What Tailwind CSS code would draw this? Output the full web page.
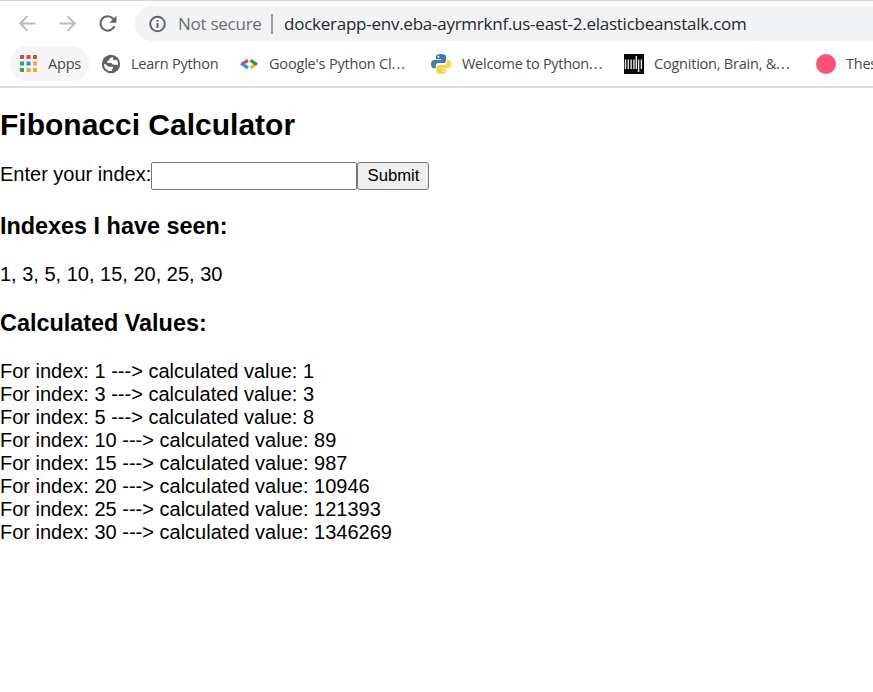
<!DOCTYPE html>
<html lang="en">
<head>
<meta charset="utf-8">
<title>Fibonacci Calculator</title>
<script src="https://cdn.jsdelivr.net/npm/@tailwindcss/browser@4"></script>
</head>
<body class="h-[692px] w-full overflow-hidden bg-white font-['Liberation_Sans',Arial,sans-serif] text-xl leading-[23px] text-black">
<header class="h-[88px] overflow-hidden border-t border-b-2 border-t-[#d4d5d7] border-b-[#dcdddf] font-['Open_Sans','Noto_Sans',sans-serif] whitespace-nowrap">
  <div class="mt-[5px] flex h-[35px] items-center">
    <svg class="ml-[18px] h-5 w-5 shrink-0" viewBox="0 0 20 20" fill="none" stroke="#b9bbbe" stroke-width="1.9"><path d="M17.5 9.5H3M9.5 2.2L2.2 9.5l7.3 7.3"/></svg>
    <svg class="ml-5 h-5 w-5 shrink-0" viewBox="0 0 20 20" fill="none" stroke="#b9bbbe" stroke-width="1.9"><path d="M1.5 9.5H16M9.5 2.2l7.3 7.3-7.3 7.3"/></svg>
    <svg class="ml-5 h-5 w-5 shrink-0" viewBox="0 0 20 20" fill="none"><path d="M16.4 12.1A7.2 7.2 0 1 1 15 4.6l1.2 1.3" stroke="#5f6368" stroke-width="2.1"/><path d="M18.4 1.7v7h-7z" fill="#5f6368"/></svg>
    <div class="ml-[17px] flex h-[35px] flex-1 items-center rounded-l-full bg-[#f1f3f4] pl-[13px]">
      <svg class="h-[18px] w-[18px] shrink-0" viewBox="0 0 18 18"><circle cx="9.5" cy="9" r="7.3" fill="none" stroke="#5f6368" stroke-width="2"/><path d="M8.500 8h2v5h-2zM8.500 5h2v1.800h-2z" fill="#5f6368"/></svg>
      <span class="ml-3 w-[93px] text-[17px] tracking-[-0.26px] text-[#6a6e73]">Not secure</span>
      <span class="h-5 w-0.5 bg-[#9b9ea2]"></span>
      <span class="ml-[11px] text-[17px] tracking-[-0.25px] text-[#26282c]">dockerapp-env.eba-ayrmrknf.us-east-2.elasticbeanstalk.com</span>
    </div>
  </div>
  <nav class="mt-[5px] flex h-[35px] items-center text-[14.5px] text-[#45484c]">
    <div class="ml-[10px] flex h-[35px] w-[79px] shrink-0 items-center rounded-full bg-[#f5f5f5] pl-[10px]">
      <svg class="h-[17px] w-[17px] shrink-0" viewBox="0 0 17 17"><path d="M0 0h4v4H0zM6.5 0h4v4h-4zM13 0h4v4h-4z" fill="#de4b41"/><path d="M0 6.5h4v4H0zM0 13h4v4H0z" fill="#35a35a"/><path d="M6.5 6.5h4v4h-4z" fill="#3484ef"/><path d="M13 6.5h4v4h-4zM6.5 13h4v4h-4zM13 13h4v4h-4z" fill="#f2ac25"/></svg>
      <span class="ml-[11px] tracking-[-0.2px]">Apps</span>
    </div>
    <svg class="ml-3 h-5 w-5 shrink-0" viewBox="0 0 20 20"><circle cx="10" cy="10" r="9.2" fill="#5f6368"/><path d="M12.500 3.300C10.500 3 9 3.800 8.600 5c-.4 1.300-1.500 1.400-2.300 2.300-.6.700-.4 1.600.8 1.600h2.700c1.200.1 1.300 1.200 2.200 1.700 1.500.3 3.300 0 5 .3.300-2.200-.4-4.100-1.800-5.500-.9.700-2 1.100-2.700.6-.8-.7-.3-1.700 0-2.700zM3 9.900c-.1 3.500 2.300 6.700 6.300 7.200l1.500-.1c.2-1-.1-1.800.8-2.300.8-.5.700-1.600-.3-1.900-1.500-.2-3 .3-4.200-.5C6 11.500 5.200 10.100 3 9.900z" fill="#fff"/></svg>
    <span class="ml-[10px] w-[109px] shrink-0 tracking-[-0.22px]">Learn Python</span>
    <svg class="h-5 w-[18px] shrink-0" viewBox="0 0 18 20" fill="none" stroke-width="3.200"><path d="M8 6.300L2 10" stroke="#e04335"/><path d="M1 9.200l7 4.700" stroke="#4386f5"/><path d="M16.800 9.500l-6.300 4.400" stroke="#f5bd18"/><path d="M10.500 6.300l6.500 4.200" stroke="#249b50"/></svg>
    <span class="ml-[11px] w-[162px] shrink-0 tracking-[-0.18px]">Google's Python Cl<span class="tracking-[1.1px]">...</span></span>
    <svg class="h-5 w-5 shrink-0" viewBox="0 0 20 20"><path d="M10 0C6.200 0 5 1.200 5 3v2.200h5.200V6H3C1 6 0 7.800 0 10.200c0 2.600 1.200 4.100 3 4.100h1.800v-2.200c0-1.700 1.200-3 3-3h4.700c1.500 0 2.600-1.100 2.600-2.600V3c0-2.200-1.800-3-5.100-3z" fill="#3e7eaf"/><path d="M10 20c3.800 0 5-1.200 5-3v-2.200H9.800V14H17c2 0 3-1.800 3-4.200 0-2.600-1.200-4.100-3-4.100h-1.200v2.200c0 1.700-1.300 3-3 3H8.100c-1.500 0-2.600 1.100-2.600 2.600V17c0 2.200 1.200 3 4.500 3z" fill="#fbd43b"/><circle cx="7.400" cy="2.700" r=".9" fill="#fff"/><circle cx="12.600" cy="17.300" r=".9" fill="#fff"/></svg>
    <span class="ml-[11px] w-[162px] shrink-0 tracking-[-0.27px]">Welcome to Python<span class="tracking-[1.1px]">...</span></span>
    <svg class="h-5 w-5 shrink-0" viewBox="0 0 20 20"><path d="M0 0h20v20H0z" fill="#080808"/><path d="M1.500 5.500V15M4.300 5.500V15M7.100 5.500V15M9.900 5.500V15M12.300 2v13M14.600 5.500V18M17.400 5.500V15" stroke="#e8e8e8" stroke-width="1.400"/></svg>
    <span class="ml-[10px] w-[162px] shrink-0 tracking-[-0.22px]">Cognition, Brain, &amp;<span class="tracking-[1.1px]">...</span></span>
    <span class="h-5 w-5 shrink-0 rounded-full bg-[#fc4f79]"></span>
    <span class="ml-[10px] tracking-[-0.25px]">Thesis</span>
  </nav>
</header>
<main>
  <h1 class="mt-5 text-[30px] leading-[34px] font-bold">Fibonacci Calculator</h1>
  <form class="mt-5 flex h-7 items-start" onsubmit="return false">
    <label for="index" class="w-[151px] shrink-0 pt-px whitespace-nowrap">Enter your index:</label>
    <input id="index" class="h-7 w-[206px] rounded-[2px] border border-[#767676] bg-white px-1 text-base">
    <button class="h-7 w-[72px] rounded-[3px] border border-[#767676] bg-[#efefef] pb-px pl-px text-center text-[16.67px] leading-[25px]">Submit</button>
  </form>
  <h2 class="mt-[23px] text-[23.4px] leading-[27px] font-bold">Indexes I have seen:</h2>
  <p class="mt-[23px]">1, 3, 5, 10, 15, 20, 25, 30</p>
  <h2 class="mt-6 text-[23.4px] leading-[27px] font-bold">Calculated Values:</h2>
  <div class="mt-[23px]">
    <div>For index: 1 ---&gt; calculated value: 1</div>
    <div>For index: 3 ---&gt; calculated value: 3</div>
    <div>For index: 5 ---&gt; calculated value: 8</div>
    <div>For index: 10 ---&gt; calculated value: 89</div>
    <div>For index: 15 ---&gt; calculated value: 987</div>
    <div>For index: 20 ---&gt; calculated value: 10946</div>
    <div>For index: 25 ---&gt; calculated value: 121393</div>
    <div>For index: 30 ---&gt; calculated value: 1346269</div>
  </div>
</main>
</body>
</html>
